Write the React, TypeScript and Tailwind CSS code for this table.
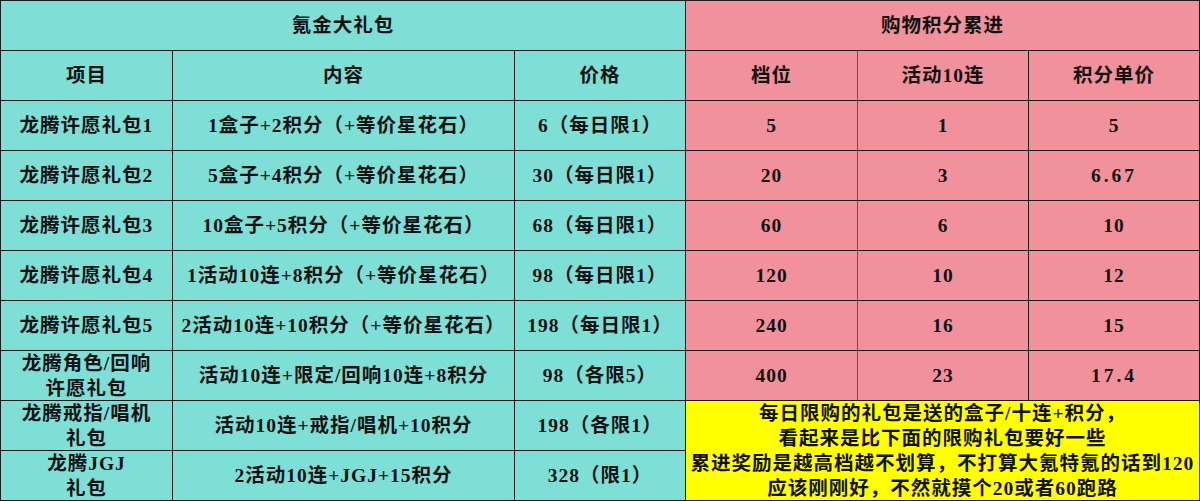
import React from "react";

const teal = "bg-[#7edfd7]";
const pink = "bg-[#f0919b]";

function C({ children, className = "" }: { children: React.ReactNode; className?: string }) {
  return (
    <div
      className={`flex items-center justify-center text-center border-r border-b border-[#1c1c1c] leading-[25px] ${className}`}
    >
      {children}
    </div>
  );
}

const rows: string[][] = [
  ["龙腾许愿礼包1", "1盒子+2积分（+等价星花石）", "6（每日限1）", "5", "1", "5"],
  ["龙腾许愿礼包2", "5盒子+4积分（+等价星花石）", "30（每日限1）", "20", "3", "6.67"],
  ["龙腾许愿礼包3", "10盒子+5积分（+等价星花石）", "68（每日限1）", "60", "6", "10"],
  ["龙腾许愿礼包4", "1活动10连+8积分（+等价星花石）", "98（每日限1）", "120", "10", "12"],
  ["龙腾许愿礼包5", "2活动10连+10积分（+等价星花石）", "198（每日限1）", "240", "16", "15"],
];

export default function App() {
  return (
    <div
      className="w-[1200px] h-[501px] bg-white text-[#111] text-[19.5px] tracking-[1px] font-bold"
      style={{ fontFamily: '"Liberation Serif", "Noto Sans CJK SC", serif' }}
    >
      <div className="grid grid-cols-[173px_342px_171px_172px_171px_171px] grid-rows-[50px_50px_50px_50px_50px_50px_50px_50px_50px_50px] border-t border-[#1c1c1c] h-[501px]">
        <C className={`${teal} col-span-3 border-l`}>氪金大礼包</C>
        <C className={`${pink} col-span-3`}>购物积分累进</C>

        <C className={`${teal} border-l`}>项目</C>
        <C className={teal}>内容</C>
        <C className={teal}>价格</C>
        <C className={`${pink} border-r-[#6e5057]`}>档位</C>
        <C className={pink}>活动10连</C>
        <C className={pink}>积分单价</C>

        {rows.map((r, i) => (
          <React.Fragment key={i}>
            <C className={`${teal} border-l`}>{r[0]}</C>
            <C className={teal}>{r[1]}</C>
            <C className={teal}>{r[2]}</C>
            <C className={`${pink} border-r-[#6e5057]`}>{r[3]}</C>
            <C className={pink}>{r[4]}</C>
            <C className={`${pink} ${r[5].includes(".") ? "tracking-[3px]" : ""}`}>{r[5]}</C>
          </React.Fragment>
        ))}

        <C className={`${teal} border-l`}>
          龙腾角色/回响
          <br />
          许愿礼包
        </C>
        <C className={teal}>活动10连+限定/回响10连+8积分</C>
        <C className={teal}>98（各限5）</C>
        <C className={`${pink} border-r-[#6e5057]`}>400</C>
        <C className={pink}>23</C>
        <C className={`${pink} tracking-[3px]`}>17.4</C>

        <C className={`${teal} border-l`}>
          龙腾戒指/唱机
          <br />
          礼包
        </C>
        <C className={teal}>活动10连+戒指/唱机+10积分</C>
        <C className={teal}>198（各限1）</C>
        <div className="col-span-3 row-span-2 bg-[#ffff00] border-r border-b border-[#1c1c1c] flex flex-col items-center justify-center text-center leading-[25px] whitespace-nowrap">
          <div>每日限购的礼包是送的盒子/十连+积分，</div>
          <div>看起来是比下面的限购礼包要好一些</div>
          <div>累进奖励是越高档越不划算，不打算大氪特氪的话到120</div>
          <div>应该刚刚好，不然就摸个20或者60跑路</div>
        </div>

        <C className={`${teal} border-l`}>
          龙腾JGJ
          <br />
          礼包
        </C>
        <C className={teal}>2活动10连+JGJ+15积分</C>
        <C className={teal}>328（限1）</C>
      </div>
    </div>
  );
}
